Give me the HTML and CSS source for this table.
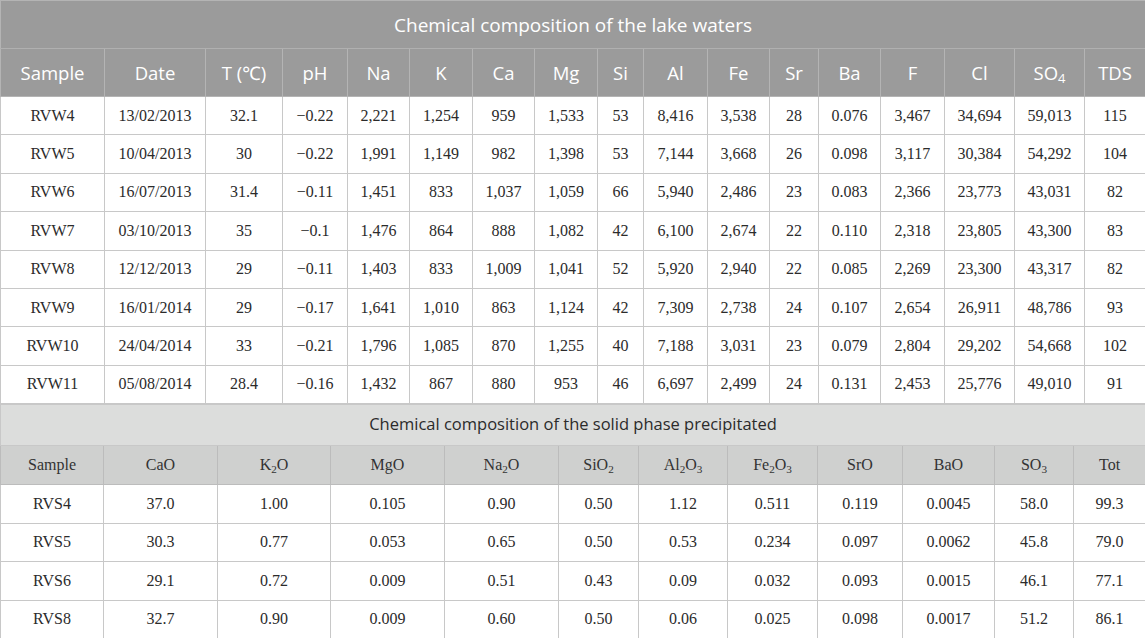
FILE: index.html
```html
<!DOCTYPE html>
<html>

<head>
    <title>Chemical composition</title>
    <link rel="stylesheet" href="styles.css">
</head>

<body>

    <!-- Lake waters -->
    <table class="tbl waters">
        <colgroup>
            <col style="width:104px"><col style="width:101px"><col style="width:77px"><col style="width:65px">
            <col style="width:62px"><col style="width:63px"><col style="width:62px"><col style="width:63px">
            <col style="width:46px"><col style="width:64px"><col style="width:62px"><col style="width:49px">
            <col style="width:62px"><col style="width:64px"><col style="width:70px"><col style="width:70px">
            <col style="width:61px">
        </colgroup>
        <tr class="title-row">
            <th colspan="17">Chemical composition of the lake waters</th>
        </tr>
        <tr class="head-row">
            <th>Sample</th><th>Date</th><th>T (&#8451;)</th><th>pH</th><th>Na</th><th>K</th><th>Ca</th><th>Mg</th>
            <th>Si</th><th>Al</th><th>Fe</th><th>Sr</th><th>Ba</th><th>F</th><th>Cl</th><th>SO<sub>4</sub></th><th>TDS</th>
        </tr>
        <tr><td>RVW4</td><td>13/02/2013</td><td>32.1</td><td>&minus;0.22</td><td>2,221</td><td>1,254</td><td>959</td><td>1,533</td><td>53</td><td>8,416</td><td>3,538</td><td>28</td><td>0.076</td><td>3,467</td><td>34,694</td><td>59,013</td><td>115</td></tr>
        <tr><td>RVW5</td><td>10/04/2013</td><td>30</td><td>&minus;0.22</td><td>1,991</td><td>1,149</td><td>982</td><td>1,398</td><td>53</td><td>7,144</td><td>3,668</td><td>26</td><td>0.098</td><td>3,117</td><td>30,384</td><td>54,292</td><td>104</td></tr>
        <tr><td>RVW6</td><td>16/07/2013</td><td>31.4</td><td>&minus;0.11</td><td>1,451</td><td>833</td><td>1,037</td><td>1,059</td><td>66</td><td>5,940</td><td>2,486</td><td>23</td><td>0.083</td><td>2,366</td><td>23,773</td><td>43,031</td><td>82</td></tr>
        <tr><td>RVW7</td><td>03/10/2013</td><td>35</td><td>&minus;0.1</td><td>1,476</td><td>864</td><td>888</td><td>1,082</td><td>42</td><td>6,100</td><td>2,674</td><td>22</td><td>0.110</td><td>2,318</td><td>23,805</td><td>43,300</td><td>83</td></tr>
        <tr><td>RVW8</td><td>12/12/2013</td><td>29</td><td>&minus;0.11</td><td>1,403</td><td>833</td><td>1,009</td><td>1,041</td><td>52</td><td>5,920</td><td>2,940</td><td>22</td><td>0.085</td><td>2,269</td><td>23,300</td><td>43,317</td><td>82</td></tr>
        <tr><td>RVW9</td><td>16/01/2014</td><td>29</td><td>&minus;0.17</td><td>1,641</td><td>1,010</td><td>863</td><td>1,124</td><td>42</td><td>7,309</td><td>2,738</td><td>24</td><td>0.107</td><td>2,654</td><td>26,911</td><td>48,786</td><td>93</td></tr>
        <tr><td>RVW10</td><td>24/04/2014</td><td>33</td><td>&minus;0.21</td><td>1,796</td><td>1,085</td><td>870</td><td>1,255</td><td>40</td><td>7,188</td><td>3,031</td><td>23</td><td>0.079</td><td>2,804</td><td>29,202</td><td>54,668</td><td>102</td></tr>
        <tr><td>RVW11</td><td>05/08/2014</td><td>28.4</td><td>&minus;0.16</td><td>1,432</td><td>867</td><td>880</td><td>953</td><td>46</td><td>6,697</td><td>2,499</td><td>24</td><td>0.131</td><td>2,453</td><td>25,776</td><td>49,010</td><td>91</td></tr>
    </table>

    <!-- Solid phase -->
    <table class="tbl solids">
        <colgroup>
            <col style="width:103px"><col style="width:114px"><col style="width:113px"><col style="width:114px">
            <col style="width:114px"><col style="width:80px"><col style="width:89px"><col style="width:90px">
            <col style="width:85px"><col style="width:92px"><col style="width:79px"><col style="width:72px">
        </colgroup>
        <tr class="title-row">
            <th colspan="12">Chemical composition of the solid phase precipitated</th>
        </tr>
        <tr class="head-row">
            <th>Sample</th><th>CaO</th><th>K<sub>2</sub>O</th><th>MgO</th><th>Na<sub>2</sub>O</th><th>SiO<sub>2</sub></th>
            <th>Al<sub>2</sub>O<sub>3</sub></th><th>Fe<sub>2</sub>O<sub>3</sub></th><th>SrO</th><th>BaO</th><th>SO<sub>3</sub></th><th>Tot</th>
        </tr>
        <tr><td>RVS4</td><td>37.0</td><td>1.00</td><td>0.105</td><td>0.90</td><td>0.50</td><td>1.12</td><td>0.511</td><td>0.119</td><td>0.0045</td><td>58.0</td><td>99.3</td></tr>
        <tr><td>RVS5</td><td>30.3</td><td>0.77</td><td>0.053</td><td>0.65</td><td>0.50</td><td>0.53</td><td>0.234</td><td>0.097</td><td>0.0062</td><td>45.8</td><td>79.0</td></tr>
        <tr><td>RVS6</td><td>29.1</td><td>0.72</td><td>0.009</td><td>0.51</td><td>0.43</td><td>0.09</td><td>0.032</td><td>0.093</td><td>0.0015</td><td>46.1</td><td>77.1</td></tr>
        <tr><td>RVS8</td><td>32.7</td><td>0.90</td><td>0.009</td><td>0.60</td><td>0.50</td><td>0.06</td><td>0.025</td><td>0.098</td><td>0.0017</td><td>51.2</td><td>86.1</td></tr>
    </table>

</body>

</html>
```
FILE: styles.css
```css
body {
    margin: 0;
    background-color: #fff;
    width: 1145px;
}

.tbl {
    width: 1145px;
    border-collapse: collapse;
    table-layout: fixed;
    font-family: "Liberation Serif", "Times New Roman", serif;
    font-size: 16px;
    color: #2b2b2b;
}

.tbl td,
.tbl th {
    text-align: center;
    padding: 0;
    white-space: nowrap;
    font-weight: normal;
}

.tbl td {
    border: 1px solid #c8c8c8;
    height: 37px;
}

.tbl sub {
    font-size: 0.7em;
    vertical-align: -0.25em;
    line-height: 0;
}

/* lake waters */
.waters .title-row th {
    background-color: #9b9b9b;
    color: #fff;
    font-family: "Open Sans", "Noto Sans", sans-serif;
    font-size: 19px;
    height: 47px;
    border: 1px solid #b4b4b4;
    border-bottom-color: #b0b0b0;
}

.waters .head-row th {
    background-color: #9b9b9b;
    color: #fff;
    font-family: "Open Sans", "Noto Sans", sans-serif;
    font-size: 18.5px;
    height: 47px;
    border: 1px solid #b4b4b4;
}

.waters td {
    height: 37.4px;
}

/* solid phase */
.solids .title-row th {
    background-color: #dcdddc;
    color: #2b2b2b;
    font-family: "Open Sans", "Noto Sans", sans-serif;
    font-size: 16.5px;
    height: 37px;
    padding-bottom: 3px;
    border: 1px solid #c8c8c8;
}

.solids .head-row th {
    background-color: #cfd0cf;
    color: #333;
    height: 38px;
    border: 1px solid #bcbcbc;
}

.solids td {
    height: 37.5px;
}
```
